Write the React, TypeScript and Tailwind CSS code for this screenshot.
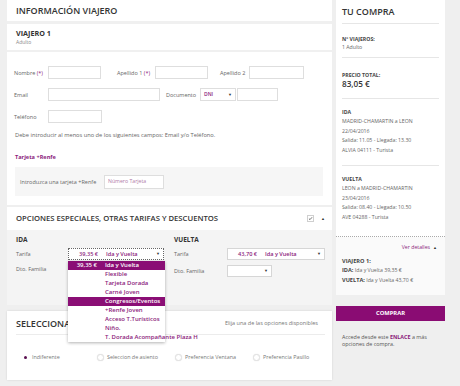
import React from 'react';

const tarifas = [
  'Ida y Vuelta',
  'Flexible',
  'Tarjeta Dorada',
  'Carné Joven',
  'Congresos/Eventos',
  '+Renfe Joven',
  'Acceso T.Turísticos',
  'Niño.',
  'T. Dorada Acompañante Plaza H',
];

function Box({ className = '' }: { className?: string }) {
  return <div className={`h-[13px] shrink-0 border border-[#dedede] bg-white ${className}`} />;
}

function Arrow() {
  return <span className="text-[4px] leading-none text-[#333]">▼</span>;
}

function Label({ children, className = '' }: { children: React.ReactNode; className?: string }) {
  return <span className={`shrink-0 text-[5.5px] leading-[8px] text-[#666] ${className}`}>{children}</span>;
}

function Radio({ label, checked = false, className = '' }: { label: string; checked?: boolean; className?: string }) {
  return (
    <div className={`flex items-center gap-[3px] ${className}`}>
      {checked ? (
        <span className="flex h-[7px] w-[7px] items-center justify-center rounded-full">
          <span className="h-[3px] w-[3px] rounded-full bg-[#5a1050]" />
        </span>
      ) : (
        <span className="h-[7px] w-[7px] rounded-full border border-[#e2e2e2] bg-white shadow-[0_0_1px_rgba(0,0,0,0.15)]" />
      )}
      <span className="text-[5.4px] text-[#777]">{label}</span>
    </div>
  );
}

function Tarifa({ price, name, focus = false, w }: { price: string; name: string; focus?: boolean; w: string }) {
  return (
    <div
      className={`flex h-[12px] shrink-0 items-center bg-white pr-[3px] text-[5.6px] font-semibold text-[#8b1a7b] ${w} ${
        focus ? 'border border-dotted border-[#666]' : 'border border-[#d6d6d6]'
      }`}
    >
      <span className="w-[29px] shrink-0 text-right">{price}</span>
      <span className="ml-[8px] flex-1">{name}</span>
      <Arrow />
    </div>
  );
}

export default function App() {
  return (
    <div className="flex h-[386px] w-[460px] overflow-hidden bg-[#efefef] font-['Open_Sans',sans-serif] text-[#666]">
      {/* columna izquierda */}
      <div className="relative ml-[7px] flex w-[325px] shrink-0 flex-col">
        <section className="flex h-[205px] flex-col bg-white">
          <h1 className="flex h-[21px] items-center px-[9px] text-[9px] font-semibold text-[#333]">INFORMACIÓN VIAJERO</h1>
          <div className="h-[3px] bg-[#f0f0f0]" />
          <div className="h-[26px] px-[9px] pt-[4px]">
            <div className="text-[7.2px] font-bold leading-[10px] text-[#333]">VIAJERO 1</div>
            <div className="text-[5px] leading-[8px] text-[#888]">Adulto</div>
          </div>
          <div className="h-[2px] bg-[#f0f0f0]" />

          <div className="flex flex-col px-[7px] pt-[14px]">
            <div className="flex h-[13px] items-center">
              <Label className="w-[34px]">
                Nombre <span className="text-[#8b1a7b]">(*)</span>
              </Label>
              <Box className="w-[53px]" />
              <Label className="ml-[16px] w-[38px]">
                Apellido 1 <span className="text-[#8b1a7b]">(*)</span>
              </Label>
              <Box className="w-[53px]" />
              <Label className="ml-[12px] w-[29px]">Apellido 2</Label>
              <Box className="w-[55px]" />
            </div>
            <div className="mt-[9px] flex h-[13px] items-center">
              <Label className="w-[34px]">Email</Label>
              <Box className="w-[112px]" />
              <Label className="ml-[6px] w-[34px]">Documento</Label>
              <div className="flex h-[13px] w-[36px] items-center justify-between border border-[#dedede] bg-white px-[3px]">
                <span className="text-[5px] font-semibold text-[#8b1a7b]">DNI</span>
                <Arrow />
              </div>
              <Box className="ml-[1px] w-[41px]" />
            </div>
            <div className="mt-[9px] flex h-[13px] items-center">
              <Label className="w-[34px]">Teléfono</Label>
              <Box className="w-[54px]" />
            </div>
            <p className="ml-[1px] mt-[8px] text-[5.7px] leading-[8px] text-[#666]">
              Debe introducir al menos uno de los siguientes campos: Email y/o Teléfono.
            </p>
            <p className="ml-[1px] mt-[14px] text-[5.6px] font-bold leading-[8px] text-[#8b1a7b]">Tarjeta +Renfe</p>
            <div className="ml-[1px] mr-[2px] mt-[6px] flex h-[29px] items-center bg-[#f6f6f6] pl-[5px]">
              <Label className="w-[84px]">Introduzca una tarjeta +Renfe</Label>
              <div className="flex h-[14px] w-[60px] items-center border border-[#dedede] bg-white px-[3px] text-[5.2px] text-[#b07aa8]">
                Número Tarjeta
              </div>
            </div>
          </div>
        </section>

        <section className="mt-[2px] flex flex-col">
          <div className="flex h-[23px] items-center bg-white pl-[9px] pr-[7px]">
            <h2 className="flex-1 text-[7.7px] font-semibold text-[#333]">OPCIONES ESPECIALES, OTRAS TARIFAS Y DESCUENTOS</h2>
            <span className="flex h-[7px] w-[7px] items-center justify-center border border-[#cfcfcf] bg-white">
              <svg viewBox="0 0 8 8" className="h-[5px] w-[5px]">
                <path d="M1.5 4.2 L3.2 5.8 L6.5 2" stroke="#444" strokeWidth="1.2" fill="none" />
              </svg>
            </span>
            <span className="ml-[7px] text-[4px] leading-none text-[#333]">▲</span>
          </div>
          <div className="flex h-[75px] bg-[#f4f4f4] pl-[9px] pt-[6px]">
            <div className="flex w-[158px] flex-col">
              <div className="text-[6.5px] font-bold leading-[8px] text-[#333]">IDA</div>
              <div className="mt-[4px] flex items-center">
                <Label className="w-[52px]">Tarifa</Label>
                <Tarifa price="39,35 €" name="Ida y Vuelta" focus w="w-[96px]" />
              </div>
              <div className="mt-[5px] flex items-center">
                <Label className="w-[52px]">Dto. Familia</Label>
              </div>
            </div>
            <div className="flex flex-col">
              <div className="text-[6.5px] font-bold leading-[8px] text-[#333]">VUELTA</div>
              <div className="mt-[4px] flex items-center">
                <Label className="w-[53px]">Tarifa</Label>
                <Tarifa price="43,70 €" name="Ida y Vuelta" w="w-[98px]" />
              </div>
              <div className="mt-[5px] flex items-center">
                <Label className="w-[53px]">Dto. Familia</Label>
                <div className="flex h-[12px] w-[45px] items-center justify-end border border-[#d6d6d6] bg-white pr-[3px]">
                  <Arrow />
                </div>
              </div>
            </div>
          </div>
        </section>

        <section className="mt-[6px] flex h-[69px] flex-col bg-white shadow-[0_0_2px_rgba(0,0,0,0.12)]">
          <div className="flex h-[23px] items-center pl-[9px] pr-[14px] pt-[2px]">
            <h2 className="flex-1 text-[9px] font-semibold text-[#333]">SELECCIONA TU ASIENTO</h2>
            <span className="text-[5.5px] text-[#777]">Elija una de las opciones disponibles</span>
          </div>
          <div className="ml-[9px] mr-[7px] h-px bg-[#ececec]" />
          <div className="flex flex-1 items-center pl-[15px]">
            <Radio label="Indiferente" checked className="w-[75px]" />
            <Radio label="Seleccion de asiento" className="w-[78px]" />
            <Radio label="Preferencia Ventana" className="w-[78px]" />
            <Radio label="Preferencia Pasillo" />
          </div>
        </section>

        {/* desplegable abierto */}
        <ul className="absolute left-[61px] top-[261px] w-[97px] bg-white shadow-[0_1px_3px_rgba(0,0,0,0.3)]">
          {tarifas.map((t, i) => {
            const on = i === 0 || i === 4;
            return (
              <li
                key={t}
                className={`flex h-[9px] items-center whitespace-nowrap text-[6px] font-semibold ${
                  on ? 'bg-[#8a0e75] text-white' : 'text-[#8b1a7b]'
                }`}
              >
                <span className="w-[29px] shrink-0 text-right">{i === 0 ? '39,35 €' : ''}</span>
                <span className="ml-[8px] shrink-0">{t}</span>
              </li>
            );
          })}
        </ul>
      </div>

      {/* columna derecha */}
      <aside className="ml-[4px] flex w-[109px] shrink-0 flex-col">
        <div className="flex h-[295px] flex-col bg-white">
          <div className="mx-[6px] flex h-[24px] items-center border-b border-[#e6e6e6] text-[9px] font-semibold text-[#333]">
            TU COMPRA
          </div>
          <div className="mx-[6px] h-[34px] border-b border-[#e6e6e6] pt-[11px] text-[5.2px] leading-[8px]">
            <div className="font-bold text-[#444]">Nº VIAJEROS:</div>
            <div>1 Adulto</div>
          </div>
          <div className="mx-[6px] h-[41px] border-b border-[#e6e6e6] pt-[13px]">
            <div className="text-[5.2px] font-bold leading-[8px] text-[#444]">PRECIO TOTAL:</div>
            <div className="text-[8.2px] font-semibold leading-[10px] text-[#333]">83,05 €</div>
          </div>
          <div className="mx-[6px] h-[67px] border-b border-[#e6e6e6] pt-[9px] text-[5.2px]">
            <div className="font-bold leading-[9px] text-[#444]">IDA</div>
            <div className="leading-[9.7px]">MADRID-CHAMARTIN a LEON</div>
            <div className="leading-[9.7px]">22/04/2016</div>
            <div className="leading-[9.7px]">Salida: 11.05 - Llegada: 13.30</div>
            <div className="leading-[9.7px]">ALVIA 04111 - Turista</div>
          </div>
          <div className="mx-[6px] h-[70px] pt-[9px] text-[5.2px]">
            <div className="font-bold leading-[9px] text-[#444]">VUELTA</div>
            <div className="leading-[9.7px]">LEON a MADRID-CHAMARTIN</div>
            <div className="leading-[9.7px]">23/04/2016</div>
            <div className="leading-[9.7px]">Salida: 08.40 - Llegada: 10.50</div>
            <div className="leading-[9.7px]">AVE 04288 - Turista</div>
          </div>
          <div className="border-t border-dotted border-[#aaa]" />
          <div className="flex flex-1 flex-col bg-[#fafafa] px-[6px] pt-[6px] text-[5.2px]">
            <div className="flex items-center justify-end gap-[3px] pr-[2px] leading-[9px] text-[#8b1a7b]">
              Ver detalles <span className="text-[4px] text-[#333]">▲</span>
            </div>
            <div className="mt-[5px] text-[5.6px] font-bold leading-[9px] text-[#444]">VIAJERO 1:</div>
            <div className="leading-[9.5px]">
              <b className="text-[5.6px] text-[#444]">IDA:</b> Ida y Vuelta 39,35 €
            </div>
            <div className="leading-[9.5px]">
              <b className="text-[5.6px] text-[#444]">VUELTA:</b> Ida y Vuelta 43,70 €
            </div>
          </div>
        </div>
        <button className="mt-[11px] h-[15px] w-full bg-[#8a0c73] text-[5.8px] font-bold text-white">COMPRAR</button>
        <p className="mt-[13px] px-[6px] text-[5.4px] leading-[6.5px] text-[#555]">
          Accede desde este <b className="text-[#8b1a7b]">ENLACE</b> a más
          <br />
          opciones de compra.
        </p>
      </aside>
    </div>
  );
}
